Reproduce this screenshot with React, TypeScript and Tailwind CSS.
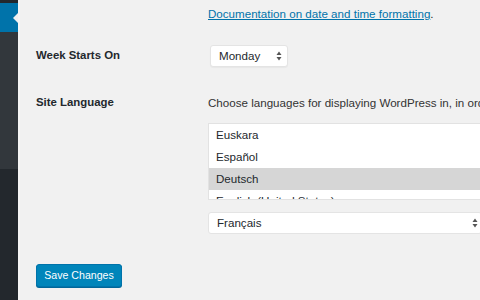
const font = { fontFamily: '"Liberation Sans", Arial, sans-serif' };

function Arrows() {
  return (
    <svg width="6" height="10" viewBox="0 0 6 10" className="shrink-0">
      <path d="M3 0.5L5.5 4H0.5Z" fill="#555" />
      <path d="M3 9.5L5.5 6H0.5Z" fill="#555" />
    </svg>
  );
}

const languages = ["Euskara", "Español", "Deutsch", "English (United States)"];

export default function App() {
  return (
    <div
      className="w-[480px] h-[300px] overflow-hidden flex bg-[#f1f1f1] text-[#23282d]"
      style={font}
    >
      {/* admin menu edge */}
      <div className="w-[18px] shrink-0 flex flex-col">
        <div className="h-[3px] bg-[#23282d]" />
        <div className="relative h-[29px] bg-[#0073aa]">
          <div className="absolute right-0 top-[10px] w-0 h-0 border-y-[5px] border-y-transparent border-r-[5px] border-r-[#f1f1f1]" />
        </div>
        <div className="h-[137px] bg-[#32373c]" />
        <div className="flex-1 bg-[#23282d]" />
      </div>
      <div className="w-[2px] shrink-0 bg-[#f6f6f6]" />

      <div className="flex-1 pl-[16px] flex flex-col">
        <div className="grid grid-cols-[172px_1fr]">
          {/* date format help */}
          <div />
          <div className="h-[28px] flex items-center text-[11.6px] whitespace-nowrap">
            <a className="text-[#0073aa] underline">Documentation on date and time formatting</a>
            <span>.</span>
          </div>

          {/* week starts on */}
          <div className="mt-[17px] h-[22px] flex items-center font-bold text-[11.4px]">
            Week Starts On
          </div>
          <div className="mt-[17px] ml-[2px] w-[78px] h-[22px] flex items-center justify-between pl-[8px] pr-[5px] bg-white border border-[#e4e4e4] rounded-[3px] shadow-[0_1px_1px_rgba(0,0,0,0.04)] text-[11.6px]">
            <span>Monday</span>
            <Arrows />
          </div>

          {/* site language */}
          <div className="mt-[28px] h-[16px] flex items-center font-bold text-[11.4px]">
            Site Language
          </div>
          <div className="mt-[28px] min-w-0">
            <div className="h-[16px] flex items-center text-[11.6px] text-[#333] whitespace-nowrap">
              Choose languages for displaying WordPress in, in order of preference:
            </div>
            <div className="mt-[12px] w-[300px] h-[77px] overflow-hidden bg-white border border-[#e2e2e2] text-[11.6px]">
              {languages.map((lang) => (
                <div
                  key={lang}
                  className={`h-[22px] shrink-0 flex items-center px-[7px] ${
                    lang === "Deutsch" ? "bg-[#d6d6d6]" : ""
                  }`}
                >
                  {lang}
                </div>
              ))}
            </div>
            <div className="mt-[12px] w-[274px] h-[22px] flex items-center justify-between pl-[8px] pr-[3px] bg-white border border-[#e4e4e4] rounded-[3px] text-[11.6px]">
              <span>Français</span>
              <Arrows />
            </div>
          </div>
        </div>

        <div className="mt-[28px]">
          <button className="w-[86px] h-[23px] rounded-[3px] bg-[#0085ba] border border-[#0073aa] shadow-[0_1px_0_#006799] text-white text-[10.6px]">
            Save Changes
          </button>
        </div>
      </div>
    </div>
  );
}
